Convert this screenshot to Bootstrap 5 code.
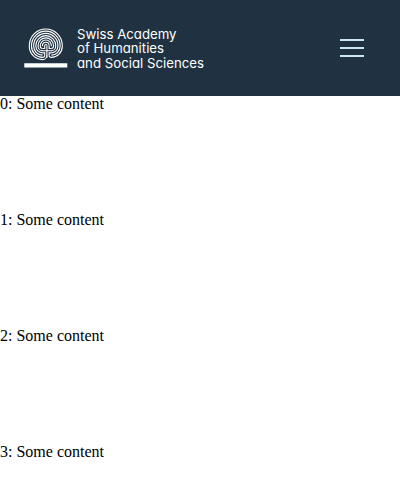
<!DOCTYPE html>
<html lang="en">
<head>
<meta charset="utf-8">
<meta name="viewport" content="width=device-width, initial-scale=1">
<title>Swiss Academy of Humanities and Social Sciences</title>
<link href="https://cdn.jsdelivr.net/npm/bootstrap@5.3.0/dist/css/bootstrap.min.css" rel="stylesheet">
<style>
body { font-family: "Liberation Serif", serif; font-size: 16px; line-height: 18px; color: #000; }
.site-header { height: 96px; background: #203241; padding: 0 36px 0 24px; }
.brand-logo text { font-family: Inter, sans-serif; font-size: 13.4px; font-weight: 400; fill: #fff; font-feature-settings: "cv11"; }
.menu-toggle { width: 24px; height: 18px; }
.menu-toggle span { height: 2px; background: #c9e6f4; }
.content-row { height: 116px; }
.content-row:last-child { height: auto; }
main { margin-top: -1px; }
</style>
<script src="https://cdn.jsdelivr.net/npm/bootstrap@5.3.0/dist/js/bootstrap.bundle.min.js"></script>
</head>
<body>
<header class="site-header navbar d-flex flex-nowrap justify-content-between align-items-center">
  <a class="d-block lh-1" href="#" aria-label="Home">
    <svg class="brand-logo d-block" width="184" height="48" viewBox="24 24 184 48">
      <g transform="translate(46.9 50.7) scale(2.2 2.22)" fill="none" stroke="#fff" stroke-width=".5">
        <path d="M0-2.3V3.2M-2.3 0H2.3M-1-2.3V-1H-2M1-2.3V-1H2M-1 2V1H-2M1 2V1H2"/>
        <path d="M-1-2.3A.5.5 0 0 1 0-2.3"/>
        <path d="M-2-2V-2.3A1.5 1.5 0 0 1 1-2.3"/>
        <path d="M-2-1A1 1 0 0 1-3-2V-2.3A2.5 2.5 0 0 1 2-2.3V-2"/>
        <path d="M-2 0A2 2 0 0 1-4-2V-2.3A3.5 3.5 0 0 1 3-2.3V-2A1 1 0 0 1 2-1"/>
        <path d="M-2 1A3 3 0 0 1-5-2V-2.3A4.5 4.5 0 0 1 4-2.3V-2A2 2 0 0 1 2 0"/>
        <path d="M-2 2A4 4 0 0 1-6-2V-2.3A5.5 5.5 0 0 1 5-2.3V-2A3 3 0 0 1 2 1"/>
        <path d="M-1 2A1 1 0 0 1-2 3A5 5 0 0 1-7-2V-2.3A6.5 6.5 0 0 1 6-2.3V-2A4 4 0 0 1 2 2"/>
        <path d="M0 2A2 2 0 0 1-2 4A6 6 0 0 1-8-2V-2.3A7.5 7.5 0 0 1 7-2.3V-2A5 5 0 0 1 2 3A1 1 0 0 1 1 2"/>
      </g>
      <path d="M24.3 63.2H67.3V67.6H24.3Z" fill="#fff"/>
      <text x="77" y="39" textLength="99.5" lengthAdjust="spacingAndGlyphs">Swiss Academy</text>
      <text x="77" y="53.2" textLength="87" lengthAdjust="spacingAndGlyphs">of Humanities</text>
      <text x="77" y="67.6" textLength="127" lengthAdjust="spacingAndGlyphs">and Social Sciences</text>
    </svg>
  </a>
  <button class="menu-toggle btn p-0 border-0 rounded-0 d-flex flex-column justify-content-between" type="button" aria-label="Menu">
    <span class="w-100"></span><span class="w-100"></span><span class="w-100"></span>
  </button>
</header>
<main>
  <div class="content-row">0: Some content</div>
  <div class="content-row">1: Some content</div>
  <div class="content-row">2: Some content</div>
  <div class="content-row">3: Some content</div>
</main>
</body>
</html>
